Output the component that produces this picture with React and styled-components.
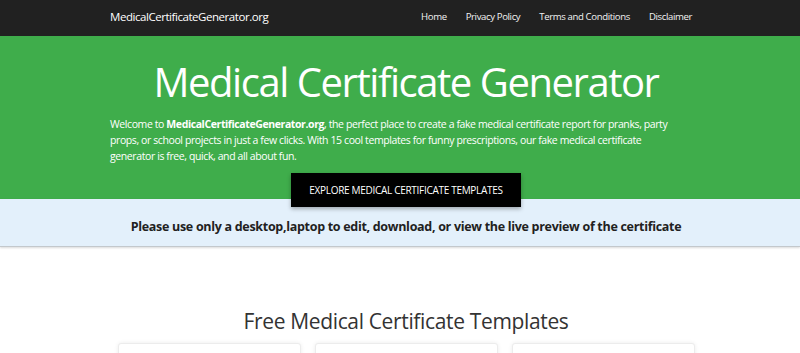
import React from 'react';
import styled, { createGlobalStyle } from 'styled-components';

const GlobalStyle = createGlobalStyle`
  body {
    margin: 0;
    font-family: 'Open Sans', 'Noto Sans', sans-serif;
    color: #212529;
    background: #fff;
  }
`;

const Navbar = styled.nav`
  height: 36px;
  background-color: #212121;
  display: flex;
  align-items: center;
  justify-content: space-between;
  padding: 0 108px 0 110px;
`;

const Brand = styled.a`
  color: #fff;
  font-size: 11.5px;
  line-height: 16px;
  letter-spacing: -0.45px;
  text-decoration: none;
  margin-top: -2px;
`;

const NavLinks = styled.ul`
  display: flex;
  align-items: center;
  gap: 19px;
  margin: -2px 0 0;
  padding: 0;
  list-style: none;
  line-height: 14px;
`;

const NavLink = styled.a`
  display: block;
  color: #f2f2f2;
  font-size: 9.6px;
  letter-spacing: -0.38px;
  text-decoration: none;
`;

const Hero = styled.section`
  background-color: #3fad4b;
  padding: 18px 98px 0 110px;
  color: #fff;
  display: flex;
  flex-direction: column;
  align-items: center;
`;

const Title = styled.h1`
  margin: 0;
  font-size: 40px;
  font-weight: 400;
  letter-spacing: -1.45px;
  line-height: 56px;
`;

const Intro = styled.p`
  margin: 6px 26px 9px 0;
  align-self: stretch;
  font-size: 10.5px;
  line-height: 16px;
  letter-spacing: -0.4px;

  strong {
    font-weight: 700;
  }
`;

const ExploreButton = styled.a`
  position: relative;
  z-index: 1;
  margin-bottom: -8px;
  width: 230px;
  height: 34px;
  display: flex;
  align-items: center;
  justify-content: center;
  background-color: #000;
  color: #fff;
  font-size: 10px;
  letter-spacing: -0.3px;
  text-transform: uppercase;
  text-decoration: none;
  box-shadow: 0 2px 4px rgba(0, 0, 0, 0.3);
`;

const Notice = styled.div`
  height: 48px;
  background-color: #e3f0fb;
  border-bottom: 1px solid #c3c8cc;
  box-shadow: 0 1px 2px rgba(0, 0, 0, 0.15);
  display: flex;
  align-items: center;
  justify-content: center;
  padding: 7px 0 0 12px;
  box-sizing: border-box;
  font-size: 12.5px;
  font-weight: 700;
  letter-spacing: -0.3px;
  color: #212121;
`;

const Templates = styled.section`
  padding: 58px 0 0 12px;
  display: flex;
  flex-direction: column;
  align-items: center;
`;

const SectionTitle = styled.h2`
  margin: 0 0 6px;
  font-size: 21px;
  font-weight: 400;
  letter-spacing: -0.35px;
  color: #333;
  line-height: 32px;
`;

const CardGrid = styled.div`
  display: grid;
  grid-template-columns: repeat(3, 183px);
  gap: 14px;
`;

const Card = styled.div`
  height: 120px;
  background: #fff;
  border: 1px solid #ececec;
  border-radius: 3px;
  box-shadow: 0 0 4px rgba(0, 0, 0, 0.08);
`;

const links = ['Home', 'Privacy Policy', 'Terms and Conditions', 'Disclaimer'];

export default function App() {
  return (
    <>
      <GlobalStyle />
      <Navbar>
        <Brand href="#">MedicalCertificateGenerator.org</Brand>
        <NavLinks>
          {links.map(l => (
            <li key={l}>
              <NavLink href="#">{l}</NavLink>
            </li>
          ))}
        </NavLinks>
      </Navbar>
      <Hero>
        <Title>Medical Certificate Generator</Title>
        <Intro>
          Welcome to <strong>MedicalCertificateGenerator.org</strong>, the perfect place to create a fake
          medical certificate report for pranks, party props, or school projects in just a few clicks. With
          15 cool templates for funny prescriptions, our fake medical certificate generator is free, quick,
          and all about fun.
        </Intro>
        <ExploreButton href="#">Explore Medical Certificate Templates</ExploreButton>
      </Hero>
      <Notice>
        Please use only a desktop,laptop to edit, download, or view the live preview of the certificate
      </Notice>
      <Templates>
        <SectionTitle>Free Medical Certificate Templates</SectionTitle>
        <CardGrid>
          <Card />
          <Card />
          <Card />
        </CardGrid>
      </Templates>
    </>
  );
}
